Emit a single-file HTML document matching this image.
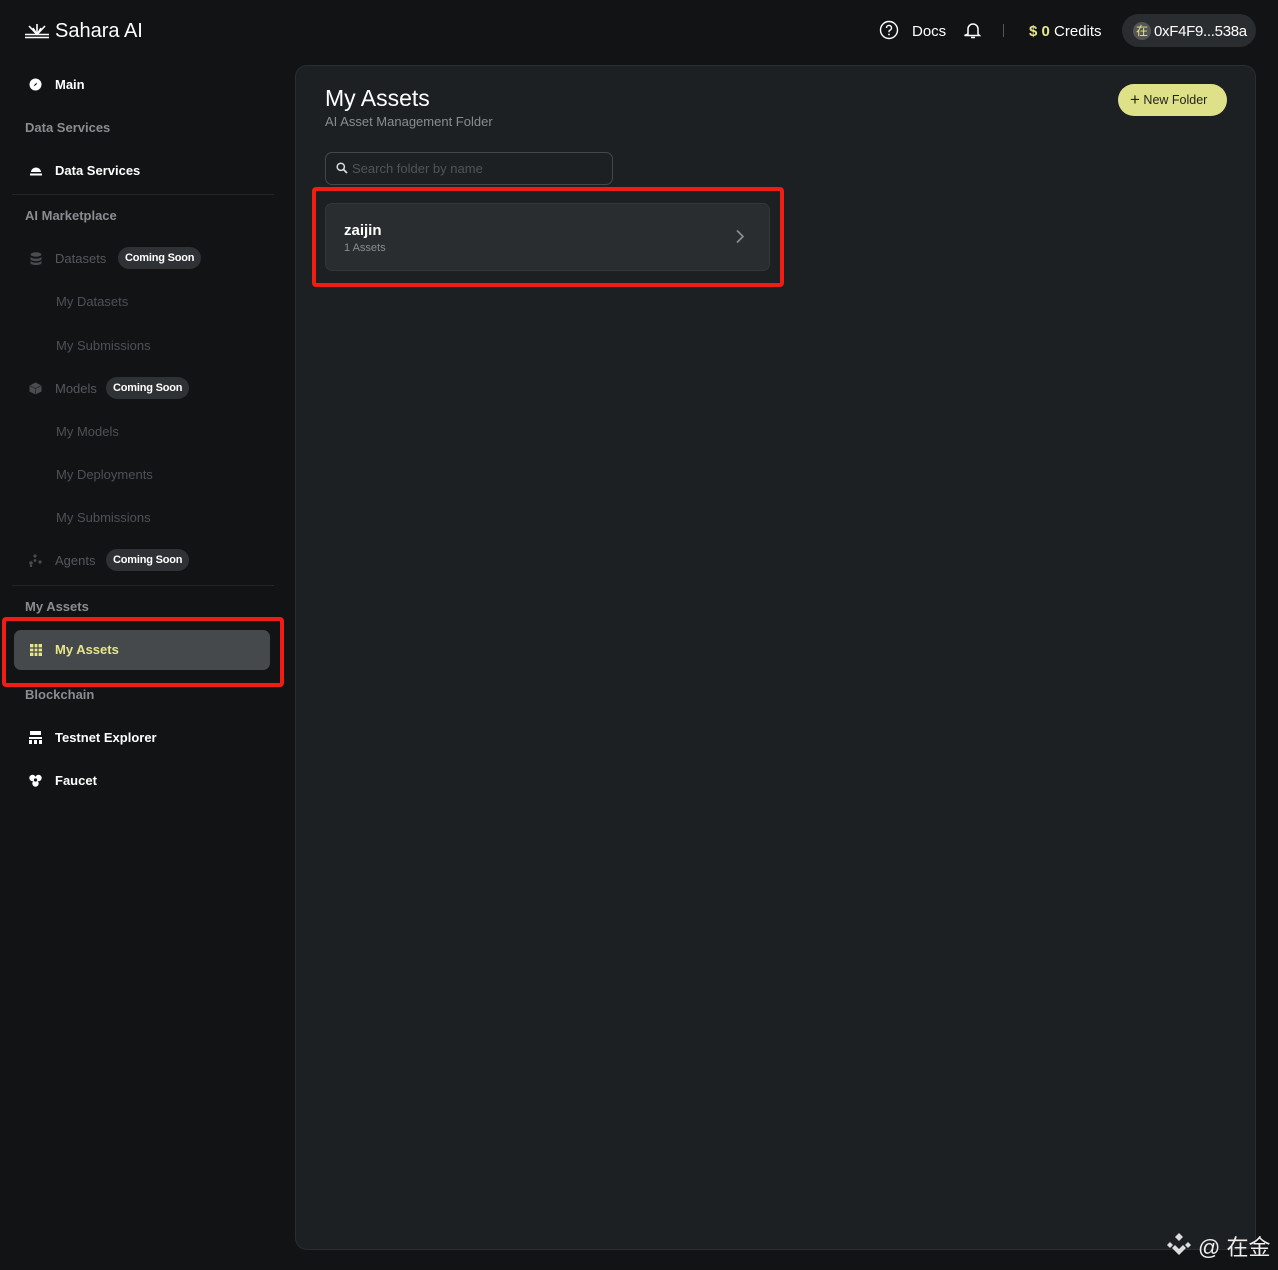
<!DOCTYPE html>
<html><head><meta charset="utf-8"><style>
*{margin:0;padding:0;box-sizing:border-box}
body{width:1278px;height:1270px;background:#111315;font-family:"Liberation Sans","Noto Sans CJK SC",sans-serif;color:#fff;position:relative;overflow:hidden}
.a{position:absolute;white-space:nowrap}
.nav{font-size:13px;font-weight:bold;color:#fff}
.sec{font-size:13px;font-weight:bold;color:#8a8d90}
.dim{font-size:13px;color:#55595c}
.sub{font-size:13px;color:#4e5255}
.badge{background:#2f3234;color:#fff;font-size:11px;font-weight:bold;border-radius:12px;padding:5px 7px;letter-spacing:-0.2px}
.hr{position:absolute;left:12px;width:262px;height:1px;background:#222527}
</style></head><body>
<svg class="a" style="left:24px;top:23px" width="26" height="16" viewBox="0 0 26 16"><g stroke="#fff" stroke-width="1.6" fill="none"><path d="M1 14.5H25"/><path d="M1 11.5H25"/><path d="M13 11.5L5 3"/><path d="M13 11.5L13 1"/><path d="M13 11.5L21 3"/><path d="M13 11.5L9 5"/><path d="M13 11.5L17 5"/></g></svg>
<div class="a" style="left:55px;top:20px;font-size:20px;color:#fff">Sahara AI</div>

<svg class="a" style="left:879px;top:20px" width="20" height="20" viewBox="0 0 20 20"><circle cx="10" cy="10" r="8.5" stroke="#fff" stroke-width="1.4" fill="none"/><path d="M7.5 8a2.5 2.5 0 1 1 3.3 2.3c-.6.3-.8.7-.8 1.3v.6" stroke="#fff" stroke-width="1.4" fill="none"/><circle cx="10" cy="14.5" r=".9" fill="#fff"/></svg>
<div class="a" style="left:912px;top:23px;font-size:15px">Docs</div>
<svg class="a" style="left:964px;top:21px" width="18" height="18" viewBox="0 0 18 18"><path d="M4 13V8a5 5 0 0 1 10 0v5l1.5 1.5h-15z" stroke="#fff" stroke-width="1.5" fill="none"/><path d="M7 16.5h4" stroke="#fff" stroke-width="1.5"/></svg>
<div class="a" style="left:1003px;top:24px;width:1px;height:13px;background:#555"></div>
<div class="a" style="left:1029px;top:23px;font-size:15px"><b style="color:#e6e68a">$ 0</b> Credits</div>
<div class="a" style="left:1122px;top:14px;width:134px;height:33px;background:#2a2d2f;border-radius:17px"></div>
<div class="a" style="left:1133px;top:22px;width:18px;height:18px;border-radius:9px;background:#555;color:#e6e68a;font-size:12px;text-align:center;line-height:18px">在</div>
<div class="a" style="left:1154px;top:23px;font-size:15px;letter-spacing:-0.3px">0xF4F9...538a</div>

<svg class="a" style="left:29px;top:78px" width="13" height="13" viewBox="0 0 13 13"><circle cx="6.5" cy="6.5" r="6" fill="#fff"/><path d="M8.5 4.5L7 7 4.5 8.5 6 6z" fill="#111"/></svg>
<div class="a nav" style="left:55px;top:77px">Main</div>
<div class="a sec" style="left:25px;top:120px">Data Services</div>
<svg class="a" style="left:29px;top:164px" width="14" height="13" viewBox="0 0 14 13"><path d="M2 8a5 4.5 0 0 1 10 0z" fill="#fff"/><rect x="1" y="9.5" width="12" height="2" fill="#fff"/></svg>
<div class="a nav" style="left:55px;top:163px">Data Services</div>
<div class="hr" style="top:194px"></div>
<div class="a sec" style="left:25px;top:208px">AI Marketplace</div>
<svg class="a" style="left:30px;top:252px" width="12" height="13" viewBox="0 0 12 13"><ellipse cx="6" cy="2.5" rx="5.5" ry="2.2" fill="#4a4d50"/><path d="M.5 4.5v2.5c0 1.2 2.5 2.2 5.5 2.2s5.5-1 5.5-2.2V4.5c0 1.2-2.5 2.2-5.5 2.2S.5 5.7.5 4.5zM.5 8.5V11c0 1.2 2.5 2 5.5 2s5.5-.8 5.5-2V8.5c0 1.2-2.5 2.2-5.5 2.2S.5 9.7.5 8.5z" fill="#4a4d50"/></svg>
<div class="a dim" style="left:55px;top:251px">Datasets</div>
<div class="a badge" style="left:118px;top:247px">Coming Soon</div>
<div class="a sub" style="left:56px;top:294px">My Datasets</div>
<div class="a sub" style="left:56px;top:338px">My Submissions</div>
<svg class="a" style="left:29px;top:382px" width="13" height="13" viewBox="0 0 13 13"><path d="M6.5 .5L12.5 3.5V9.5L6.5 12.5.5 9.5V3.5z" fill="#4a4d50"/><path d="M.5 3.5L6.5 6.5 12.5 3.5M6.5 6.5V12.5" stroke="#2a2c2e" fill="none"/></svg>
<div class="a dim" style="left:55px;top:381px">Models</div>
<div class="a badge" style="left:106px;top:377px">Coming Soon</div>
<div class="a sub" style="left:56px;top:424px">My Models</div>
<div class="a sub" style="left:56px;top:467px">My Deployments</div>
<div class="a sub" style="left:56px;top:510px">My Submissions</div>
<svg class="a" style="left:29px;top:554px" width="13" height="13" viewBox="0 0 13 13"><g fill="#4a4d50"><circle cx="6" cy="2" r="1.6"/><circle cx="2" cy="9" r="1.8"/><circle cx="11" cy="8" r="1.6"/><circle cx="6" cy="6.5" r="1.4"/><circle cx="2" cy="12" r="1.2"/></g></svg>
<div class="a dim" style="left:55px;top:553px">Agents</div>
<div class="a badge" style="left:106px;top:549px">Coming Soon</div>
<div class="hr" style="top:585px"></div>
<div class="a sec" style="left:25px;top:599px">My Assets</div>
<div class="a" style="left:14px;top:630px;width:256px;height:40px;background:#46494c;border-radius:7px"></div>
<div class="a" style="left:2px;top:617px;width:282px;height:70px;border:4px solid #f01d14;border-radius:4px"></div>
<svg class="a" style="left:30px;top:644px" width="12" height="12" viewBox="0 0 12 12"><rect x="0" y="0" width="12" height="12" fill="#e6e68a"/><path d="M0 4H12M0 8H12M4 0V12M8 0V12" stroke="#46494c" stroke-width="1.2"/></svg>
<div class="a nav" style="left:55px;top:642px;color:#e6e68a">My Assets</div>
<div class="a sec" style="left:25px;top:687px">Blockchain</div>
<svg class="a" style="left:29px;top:731px" width="13" height="13" viewBox="0 0 13 13"><g fill="#fff"><rect x="1" y="0" width="11" height="4"/><rect x="0" y="6" width="13" height="2"/><rect x="0" y="9" width="3" height="4"/><rect x="5" y="9" width="3" height="4"/><rect x="10" y="9" width="3" height="4"/></g></svg>
<div class="a nav" style="left:55px;top:730px">Testnet Explorer</div>
<svg class="a" style="left:29px;top:774px" width="13" height="13" viewBox="0 0 13 13"><g fill="#fff"><circle cx="3.5" cy="4" r="3.2"/><circle cx="9.5" cy="4" r="3.2"/><circle cx="6.5" cy="9.5" r="3.2"/></g><circle cx="6.5" cy="6" r="1.6" fill="#111"/></svg>
<div class="a nav" style="left:55px;top:773px">Faucet</div>

<div class="a" style="left:295px;top:65px;width:961px;height:1185px;background:#1d2022;border:1px solid #2b2e30;border-radius:12px"></div>
<div class="a" style="left:325px;top:85px;font-size:23px;color:#fff">My Assets</div>
<div class="a" style="left:325px;top:114px;font-size:13px;color:#8a8d90">AI Asset Management Folder</div>
<div class="a" style="left:1118px;top:84px;width:109px;height:32px;background:#dfe188;border-radius:16px;color:#222;font-size:12.5px;line-height:32px;padding-left:12px"><span style="font-size:17px;vertical-align:-1px">+</span> New Folder</div>
<div class="a" style="left:325px;top:152px;width:288px;height:33px;border:1px solid #44474a;border-radius:7px"></div>
<svg class="a" style="left:336px;top:162px" width="12" height="12" viewBox="0 0 12 12"><circle cx="4.8" cy="4.8" r="3.6" stroke="#ddd" stroke-width="1.5" fill="none"/><path d="M7.5 7.5L11 11" stroke="#ddd" stroke-width="1.7"/></svg>
<div class="a" style="left:352px;top:161px;font-size:13px;color:#505457">Search folder by name</div>
<div class="a" style="left:325px;top:203px;width:445px;height:68px;background:#2a2d2f;border:1px solid #33363a;border-radius:7px"></div>
<div class="a" style="left:312px;top:187px;width:472px;height:100px;border:4px solid #f01d14;border-radius:4px"></div>
<div class="a" style="left:344px;top:222px;font-size:15px;font-weight:bold;color:#fff">zaijin</div>
<div class="a" style="left:344px;top:242px;font-size:11px;color:#8a8d90">1 Assets</div>
<svg class="a" style="left:735px;top:229px" width="10" height="15" viewBox="0 0 10 15"><path d="M2 1.5L8 7.5 2 13.5" stroke="#8a8d90" stroke-width="1.7" fill="none"/></svg>

<svg class="a" style="left:1165px;top:1231px" width="28" height="28" viewBox="0 0 28 28"><g fill="#ddd"><path d="M14 2l4 4-4 4-4-4z"/><path d="M5 11l3 3-3 3-3-3z"/><path d="M23 11l3 3-3 3-3-3z"/><path d="M14 18l4-4 3 3-7 7-7-7 3-3z"/></g></svg>
<div class="a" style="left:1198px;top:1230px;font-size:22px;color:#eee">@ 在金</div>
</body></html>
